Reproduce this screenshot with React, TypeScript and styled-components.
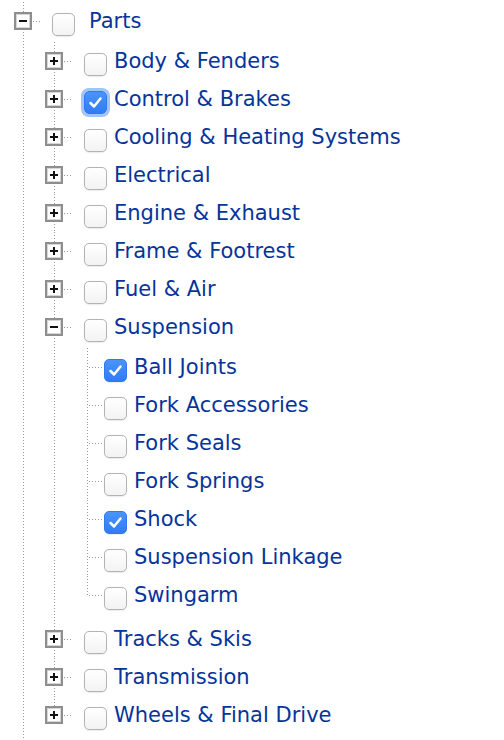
import React from "react";
import styled, { createGlobalStyle, css } from "styled-components";

const Global = createGlobalStyle`
  html, body { margin: 0; padding: 0; background: #ffffff; }
  body { font-family: "DejaVu Sans", "Liberation Sans", sans-serif; }
`;

const dotsV = css`
  background-image: linear-gradient(to bottom, #9a9a9a 1px, transparent 1px);
  background-size: 1px 3px;
  background-repeat: repeat-y;
`;

const dotsH = css`
  background-image: linear-gradient(to right, #9a9a9a 1px, transparent 1px);
  background-size: 3px 1px;
  background-repeat: repeat-x;
  background-position: left center;
`;

const Tree = styled.ul`
  list-style: none;
  margin: 0;
  padding: 2px 0 0 14px;
`;

const ChildList = styled.ul<{ $indent: number; $top?: number; $bottom?: number }>`
  list-style: none;
  margin: 0;
  padding: ${(p) => p.$top ?? 0}px 0 ${(p) => p.$bottom ?? 0}px ${(p) => p.$indent}px;
`;

const Item = styled.li<{ $last?: boolean }>`
  position: relative;
  &::before {
    content: "";
    position: absolute;
    left: 9px;
    top: 0;
    width: 1px;
    height: ${(p) => (p.$last ? "19px" : "100%")};
    ${dotsV}
  }
`;

const Row = styled.div<{ $pad?: number }>`
  position: relative;
  display: flex;
  align-items: center;
  height: 38px;
  padding-left: ${(p) => p.$pad ?? 0}px;
`;

const Toggle = styled.span<{ $open?: boolean }>`
  position: relative;
  box-sizing: border-box;
  flex: none;
  width: 18px;
  height: 18px;
  border: 2px solid #8e8e8e;
  background: #fff;
  box-shadow: inset 0 0 0 1px #d6d6d6;
  &::before {
    content: "";
    position: absolute;
    left: 3px;
    right: 3px;
    top: 6px;
    height: 2px;
    background: #111;
  }
  &::after {
    content: "";
    display: ${(p) => (p.$open ? "none" : "block")};
    position: absolute;
    top: 3px;
    bottom: 3px;
    left: 6px;
    width: 2px;
    background: #111;
  }
`;

const Connector = styled.span<{ $w: number; $gap: number }>`
  flex: none;
  width: ${(p) => p.$w}px;
  height: 1px;
  margin-left: 1px;
  margin-right: ${(p) => p.$gap}px;
  ${dotsH}
`;

const Box = styled.span<{ $checked?: boolean; $focus?: boolean }>`
  box-sizing: border-box;
  flex: none;
  display: flex;
  align-items: center;
  justify-content: center;
  width: 23px;
  height: 23px;
  margin-top: 6px;
  border-radius: 5px;
  border: 1px solid ${(p) => (p.$checked ? "#2f78ee" : "#b3b3b3")};
  background: ${(p) =>
    p.$checked
      ? "linear-gradient(to bottom, #4a94fb, #2f7cf4)"
      : "linear-gradient(to bottom, #ffffff, #f3f3f3)"};
  box-shadow: ${(p) =>
    p.$focus
      ? "0 0 0 3px rgba(82, 146, 247, 0.55)"
      : "0 0.5px 1px rgba(0,0,0,0.08)"};
`;

const Label = styled.span<{ $gap: number }>`
  margin-left: ${(p) => p.$gap}px;
  font-size: 21px;
  color: #06349a;
  white-space: nowrap;
`;

function Check({ checked, focus }: { checked?: boolean; focus?: boolean }) {
  return (
    <Box $checked={checked} $focus={focus}>
      {checked && (
        <svg width="15" height="15" viewBox="0 0 15 15">
          <path
            d="M2.5 8 L6 11.5 L12.5 3.5"
            fill="none"
            stroke="#fff"
            strokeWidth="2.5"
            strokeLinecap="round"
            strokeLinejoin="round"
          />
        </svg>
      )}
    </Box>
  );
}

type Node = { label: string; checked?: boolean; focus?: boolean; open?: boolean; children?: Node[] };

const parts: Node[] = [
  { label: "Body & Fenders" },
  { label: "Control & Brakes", checked: true, focus: true },
  { label: "Cooling & Heating Systems" },
  { label: "Electrical" },
  { label: "Engine & Exhaust" },
  { label: "Frame & Footrest" },
  { label: "Fuel & Air" },
  {
    label: "Suspension",
    open: true,
    children: [
      { label: "Ball Joints", checked: true },
      { label: "Fork Accessories" },
      { label: "Fork Seals" },
      { label: "Fork Springs" },
      { label: "Shock", checked: true },
      { label: "Suspension Linkage" },
      { label: "Swingarm" },
    ],
  },
  { label: "Tracks & Skis" },
  { label: "Transmission" },
  { label: "Wheels & Final Drive" },
];

export default function App() {
  return (
    <>
      <Global />
      <Tree>
        <Item>
          <Row>
            <Toggle $open />
            <Connector $w={7} $gap={12} />
            <Check />
            <Label $gap={14}>Parts</Label>
          </Row>
          <ChildList $indent={31} $top={2} $bottom={20}>
            {parts.map((n, i) => (
              <Item key={n.label} $last={i === parts.length - 1}>
                <Row>
                  <Toggle $open={n.open} />
                  <Connector $w={7} $gap={13} />
                  <Check checked={n.checked} focus={n.focus} />
                  <Label $gap={7}>{n.label}</Label>
                </Row>
                {n.children && (
                  <ChildList $indent={33} $top={2} $bottom={6}>
                    {n.children.map((c, j) => (
                      <Item key={c.label} $last={j === n.children!.length - 1}>
                        <Row $pad={10}>
                          <Connector $w={15} $gap={0} />
                          <Check checked={c.checked} focus={c.focus} />
                          <Label $gap={7}>{c.label}</Label>
                        </Row>
                      </Item>
                    ))}
                  </ChildList>
                )}
              </Item>
            ))}
          </ChildList>
        </Item>
      </Tree>
    </>
  );
}
